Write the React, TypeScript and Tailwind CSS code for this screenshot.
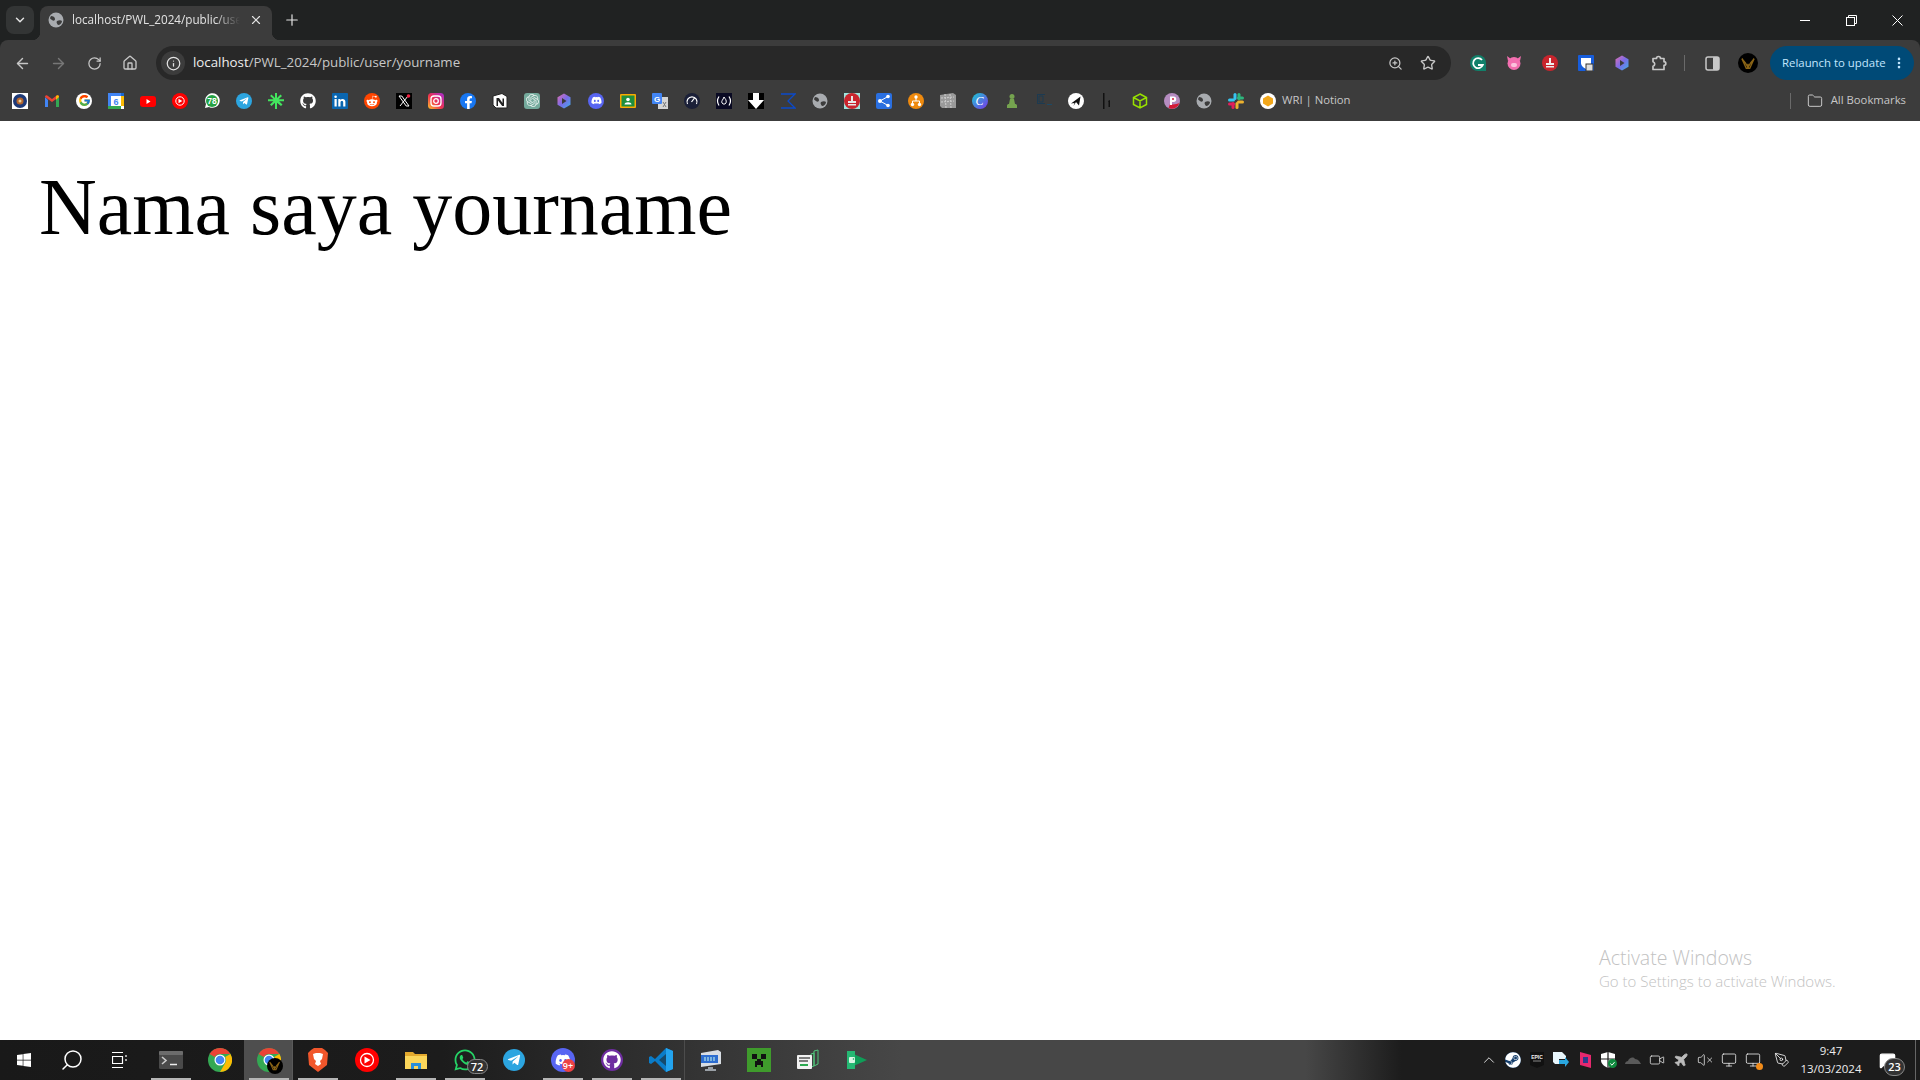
import React from "react";
import { ArrowLeft, ArrowRight, RotateCw, Info, ChevronDown, Plus, X, ZoomIn, Star, Folder, ChevronUp, Search, MoreVertical, Home, VolumeX, Plane, Video, Monitor, PenTool, MessageSquare } from "lucide-react";
import { FaGithub, FaTelegramPlane, FaDiscord, FaWhatsapp, FaRedditAlien, FaFacebookF, FaWindows, FaSteam } from "react-icons/fa";
import { FcGoogle } from "react-icons/fc";
import { SiOpenai } from "react-icons/si";

const ui = { fontFamily: '"Open Sans", "Noto Sans", sans-serif' };

const S = ({ children }: { children: React.ReactNode }) => (
  <svg width="16" height="16" viewBox="0 0 16 16">{children}</svg>
);

const GlobeGrey = () => (
  <S>
    <circle cx="8" cy="8" r="7.500" fill="#a8abaf" />
    <path d="M3 4c2 0 4 1 4 3S5 9 4 8 2 7 2 6zM9 9c2-1 4-1 5 0 0 2-2 4-4 4-1-1-2-3-1-4z" fill="#3c3c3c" />
  </S>
);

const bookmarks: React.ReactNode[] = [
  <S><rect width="16" height="16" fill="#fff" /><circle cx="8" cy="8" r="7" fill="#1e3a78" /><circle cx="8" cy="8" r="3.500" fill="#b5652c" /><circle cx="8" cy="8" r="1.500" fill="#e5d3a0" /></S>,
  <S><path d="M1 4v10h3V7z" fill="#4285f4" /><path d="M12 14h3V4l-3 3z" fill="#34a853" /><path d="M1 4c0-2 2-2 3-1l4 3 4-3c1-1 3-1 3 1l-7 5z" fill="#ea4335" /><path d="M12 3c1-1 3-1 3 1l-3 3z" fill="#fbbc04" /></S>,
  <span className="w-4 h-4 rounded-full bg-white flex items-center justify-center"><FcGoogle size={13} /></span>,
  <S><rect width="16" height="16" fill="#fff" /><rect width="16" height="3" fill="#4285f4" /><rect width="3" height="16" fill="#4285f4" /><rect x="13" width="3" height="13" fill="#fbbc04" /><rect y="13" width="13" height="3" fill="#34a853" /><rect x="13" width="3" height="3" fill="#1967d2" /><text x="8" y="11.500" fontSize="9" fontWeight="700" textAnchor="middle" fill="#4285f4" fontFamily="Liberation Sans">6</text></S>,
  <S><rect y="3" width="16" height="11" rx="3" fill="#f00" /><path d="M6.500 6v5l4-2.500z" fill="#fff" /></S>,
  <S><circle cx="8" cy="8" r="8" fill="#f00" /><circle cx="8" cy="8" r="4.200" fill="none" stroke="#fff" /><path d="M6.500 5.800v4.400L10.300 8z" fill="#fff" /></S>,
  <S><path d="M1 15l1-4A7.300 7.300 0 1 1 5 14z" fill="#fff" /><circle cx="8" cy="8" r="6" fill="#25a244" /><text x="8" y="11" fontSize="8.500" fontWeight="700" textAnchor="middle" fill="#fff" fontFamily="Liberation Sans">78</text></S>,
  <span className="w-4 h-4 rounded-full bg-[#2ca5e0] flex items-center justify-center text-white"><FaTelegramPlane size={10} /></span>,
  <S><path d="M7 0h2v5l3.500-3.500 1.500 1.500-3.400 3.200H16v2h-4.900l3.400 3.200-1.500 1.500L9 9.700V16H7V9.700l-3.500 3.200L2 11.400l3.400-3.200H0v-2h5.600L2.100 3l1.400-1.500L7 5z" fill="#43e55e" /></S>,
  <span className="text-white"><FaGithub size={16} /></span>,
  <S><rect width="16" height="16" rx="1" fill="#0a66b0" /><rect x="2.500" y="6" width="2.200" height="7.500" fill="#fff" /><circle cx="3.600" cy="3.800" r="1.300" fill="#fff" /><path d="M6.300 6h2.100v1c1-1.600 5-1.800 5 1.800v4.700h-2.200V9.500c0-2-2.700-1.800-2.700 0v4H6.300z" fill="#fff" /></S>,
  <span className="w-4 h-4 rounded-full bg-[#ff4500] flex items-center justify-center text-white"><FaRedditAlien size={12} /></span>,
  <S><rect width="16" height="16" fill="#000" /><path d="M3 3h2.800L13 13h-2.800zM12 3l-8 10" fill="none" stroke="#fff" strokeWidth="1" /><circle cx="12.500" cy="3" r="1.800" fill="#f02040" /></S>,
  <S><defs><linearGradient id="ig" x1="0" y1="1" x2="1" y2="0"><stop offset="0" stopColor="#fdc32c" /><stop offset=".45" stopColor="#f0324e" /><stop offset="1" stopColor="#a32bd3" /></linearGradient></defs><rect width="16" height="16" rx="3.500" fill="url(#ig)" /><rect x="3" y="3" width="10" height="10" rx="3" fill="none" stroke="#fff" strokeWidth="1.300" /><circle cx="8" cy="8" r="2.300" fill="none" stroke="#fff" strokeWidth="1.300" /></S>,
  <span className="w-4 h-4 rounded-full bg-[#1877f2] flex items-end justify-center text-white"><FaFacebookF size={13} /></span>,
  <S><path d="M1 3l9-2.500 5 3V15H4l-3-3z" fill="#fff" stroke="#222" strokeWidth="1" /><path d="M4.500 5h2.500l3.500 5V5.500h1.500V13h-1.800L6 7.500V13H4.500z" fill="#222" /></S>,
  <span className="w-4 h-4 rounded-[3px] bg-[#74aa9c] flex items-center justify-center text-white/80"><SiOpenai size={13} /></span>,
  <S><defs><linearGradient id="cp" x1="0" y1="0" x2="1" y2="1"><stop offset="0" stopColor="#e06fb0" /><stop offset=".5" stopColor="#7a6be8" /><stop offset="1" stopColor="#3fb0e8" /></linearGradient></defs><path d="M8 0.500l6.500 3.700v7.600L8 15.500l-6.500-3.700V4.200z" fill="url(#cp)" /><path d="M6 5l4.500 3L6 11z" fill="#3c3c3c" /></S>,
  <span className="w-4 h-4 rounded-full bg-[#5865f2] flex items-center justify-center text-white"><FaDiscord size={11} /></span>,
  <S><rect y="1" width="16" height="14" rx="1" fill="#f9ab00" /><rect x="1.500" y="2.500" width="13" height="11" fill="#1e8e3e" /><circle cx="8" cy="6.500" r="1.800" fill="#fff" /><path d="M4.500 11.500c0-3 7-3 7 0z" fill="#fff" /></S>,
  <S><rect x="6" y="4" width="10" height="12" fill="#d4d4d4" /><path d="M11 9l3 5M14 9l-3 5" stroke="#777" fill="none" /><rect width="10" height="11" rx="1" fill="#4285f4" /><text x="5" y="8.500" fontSize="8" fontWeight="700" textAnchor="middle" fill="#fff" fontFamily="Liberation Sans">G</text></S>,
  <S><circle cx="8" cy="8" r="8" fill="#1b2038" /><path d="M3.500 11a5 5 0 1 1 9 0" fill="none" stroke="#fff" strokeWidth="1.200" /><path d="M7.500 9l3-4" stroke="#fff" strokeWidth="1.200" /></S>,
  <S><rect width="16" height="16" fill="#0a0a23" /><path d="M3 3.500c-2 3-2 6 0 9M13 3.500c2 3 2 6 0 9" fill="none" stroke="#fff" strokeWidth="1.200" /><path d="M8 4c1 2 3 3 2 6-1 1.500-3 1.500-4 0-1-2 1-3 2-6z" fill="none" stroke="#fff" strokeWidth="1" /></S>,
  <S><rect width="16" height="16" fill="#000" /><path d="M5 0h6v7h5l-8 9-8-9h5z" fill="#fff" /></S>,
  <S><path d="M1 1h14L8 8l7 7H1" fill="none" stroke="#0b49c9" strokeWidth="1.300" /></S>,
  <GlobeGrey />,
  <S><rect width="16" height="16" fill="#9fe5dd" /><circle cx="8" cy="8" r="8" fill="#c9252d" /><path d="M7 3h2v5h3v2H4V8h3zM4 11h8v1.500H4z" fill="#e8e8e8" /></S>,
  <S><rect width="16" height="16" rx="2" fill="#2a6fe0" /><circle cx="4" cy="8" r="2" fill="#fff" /><circle cx="12" cy="3.500" r="1.800" fill="#fff" /><circle cx="12" cy="12.500" r="1.800" fill="#fff" /><path d="M4 8l8-4.500M4 8l8 4.500" stroke="#fff" /></S>,
  <S><circle cx="8" cy="8" r="8" fill="#ef8a0e" /><path d="M8 3v5M4.500 11.500V8h7v3.500" fill="none" stroke="#fff" strokeWidth="1" /><circle cx="8" cy="4" r="1.700" fill="#fff" /><circle cx="4.500" cy="11.500" r="1.700" fill="#fff" /><circle cx="11.500" cy="11.500" r="1.700" fill="#fff" /></S>,
  <S><path d="M0 2l13-2 3 2v13H2l-2-2z" fill="#9a9a9a" /><path d="M1 5l13-1M1 9l13-1M5 1l1 14M10 1l1 14" stroke="#c8c8c8" strokeWidth="1.200" strokeDasharray="2 1" /></S>,
  <S><defs><linearGradient id="cv" x1="0" y1="0" x2="1" y2="1"><stop offset="0" stopColor="#19cbd3" /><stop offset="1" stopColor="#7b33e8" /></linearGradient></defs><circle cx="8" cy="8" r="8" fill="url(#cv)" /><text x="7.500" y="12" fontSize="12" fontStyle="italic" textAnchor="middle" fill="#fff" fontFamily="Liberation Serif">C</text></S>,
  <S><circle cx="8" cy="3.500" r="2.500" fill="#75a34f" /><path d="M6 6h4l1 5H5zM3 12.500c0-1 1-1.500 2-1.500h6c1 0 2 .500 2 1.500V15H3z" fill="#75a34f" /></S>,
  <S><path d="M1 1h8v1H2v8h7v1H1z" fill="#1d3a50" /><path d="M3 3h4v6H3z" fill="none" stroke="#1d3a50" /><rect x="11" y="11" width="5" height="1" fill="#1d4a66" /></S>,
  <S><circle cx="8" cy="8" r="8" fill="#fff" /><path d="M12.500 3.500L3 10.500l3.500-.5-1 3 2.500-4 3 3.500z" fill="#111" /></S>,
  <S><path d="M3 0h1.500v16H3z" fill="#111" /><path d="M8 8l2-1v7H8.500V9z" fill="#111" /></S>,
  <S><path d="M8 1l6.500 3.500v7L8 15l-6.500-3.500v-7zM1.500 4.500L8 8l6.500-3.500M8 8v7" fill="none" stroke="#97e000" strokeWidth="1.500" /></S>,
  <S><circle cx="8" cy="8" r="8" fill="#b58cc0" /><path d="M15.500 10a8 8 0 0 1-11 5L6 11c3 1 7 0 9.500-1z" fill="#d31b37" /><path d="M6 3.500h3.500a2.500 2.500 0 0 1 0 5.500H8v3H6z" fill="#fff" /><circle cx="9" cy="6" r="1" fill="#d31b37" /></S>,
  <GlobeGrey />,
  <S><rect x="5.500" y="0" width="3" height="7" rx="1.500" fill="#36c5f0" /><rect x="0" y="5.500" width="7" height="3" rx="1.500" fill="#36c5f0" /><rect x="9" y="7.500" width="7" height="3" rx="1.500" fill="#ecb22e" /><rect x="7.500" y="9" width="3" height="7" rx="1.500" fill="#ecb22e" /><rect x="9.500" y="0" width="3" height="7" rx="1.500" fill="#2eb67d" /><rect x="9" y="3.500" width="7" height="3" rx="1.500" fill="#2eb67d" /><rect x="3.500" y="9" width="3" height="7" rx="1.500" fill="#e01e5a" /><rect x="0" y="9.500" width="7" height="3" rx="1.500" fill="#e01e5a" /></S>,
];

const ChromeLogo = ({ size = 24 }: { size?: number }) => (
  <svg width={size} height={size} viewBox="0 0 24 24">
    <circle cx="12" cy="12" r="12" fill="#34a853" />
    <path d="M12 0a12 12 0 0 1 10.400 6H12a6 6 0 0 0-5.200 3L1.600 6A12 12 0 0 1 12 0z" fill="#ea4335" />
    <path d="M22.400 6A12 12 0 0 1 12 24l5.200-9a6 6 0 0 0 0-6z" fill="#fbbc04" />
    <circle cx="12" cy="12" r="5.500" fill="#fff" />
    <circle cx="12" cy="12" r="4.300" fill="#4285f4" />
  </svg>
);

const VIcon = ({ size = 16 }: { size?: number }) => (
  <span className="rounded-full bg-black flex items-center justify-center" style={{ width: size, height: size }}>
    <svg width={size * 0.7} height={size * 0.7} viewBox="0 0 16 16"><path d="M1 3l5 11h1.500L8 9l.5 5H10l5-11-4 5-3 5-3-5z" fill="none" stroke="#8a6416" strokeWidth="1.500" /></svg>
  </span>
);

const apps: { node: React.ReactNode; under?: boolean; active?: boolean; stack?: boolean }[] = [
  { node: <svg width="24" height="18" viewBox="0 0 24 18"><rect width="24" height="18" rx="1.500" fill="#4a4a4a" /><rect width="24" height="4" rx="1" fill="#6c6c6c" /><path d="M3 6l4 3.500L3 13" stroke="#ccc" strokeWidth="1.600" fill="none" /><path d="M11 13.500h7" stroke="#eee" strokeWidth="1.500" /></svg>, under: true },
  { node: <ChromeLogo /> },
  { node: <span className="relative block w-6 h-6"><ChromeLogo /><span className="absolute left-[10px] top-[10px]"><VIcon size={16} /></span></span>, under: true, active: true, stack: true },
  { node: <svg width="20" height="24" viewBox="0 0 20 24"><path d="M3 2l3-2h8l3 2 3 3-1 12-9 7-9-7L0 5z" fill="#f1562b" /><path d="M5 6l3-1h4l3 1-1 5-2 2 1 3-3 2-3-2 1-3-2-2z" fill="#fff" /></svg>, under: true },
  { node: <svg width="24" height="24" viewBox="0 0 24 24"><circle cx="12" cy="12" r="12" fill="#f00" /><circle cx="12" cy="12" r="6.500" fill="none" stroke="#fff" strokeWidth="1.300" /><path d="M9.500 8.500v7l6-3.500z" fill="#fff" /></svg> },
  { node: <svg width="22" height="18" viewBox="0 0 22 18"><path d="M0 1h8l2 2h12v15H0z" fill="#e3a92e" /><rect y="5" width="22" height="13" fill="#fbd65a" /><path d="M6 12h10v6h-3v-3H9v3H6z" fill="#2a8fd8" /></svg>, under: true },
  { node: <span className="relative block w-6 h-6 text-[#25d366]"><FaWhatsapp size={24} /><span className="absolute left-[14px] top-[11px] w-[21px] h-[15px] rounded-full border border-[#888] bg-[#333] text-white text-[11px] leading-[13px] font-semibold text-center">72</span></span>, under: true },
  { node: <span className="w-[22px] h-[22px] rounded-full bg-[#2ca5e0] flex items-center justify-center text-white"><FaTelegramPlane size={14} /></span> },
  { node: <span className="relative block w-6 h-6"><span className="w-6 h-6 rounded-full bg-[#5865f2] flex items-center justify-center text-white"><FaDiscord size={16} /></span><span className="absolute left-[11px] top-[11px] w-[13px] h-[13px] rounded-full bg-[#ed4245] text-white text-[9px] leading-[13px] font-semibold text-center">9+</span></span>, under: true },
  { node: <span className="w-[22px] h-[22px] rounded-full bg-[#6e2da0] flex items-center justify-center text-white"><FaGithub size={18} /></span>, under: true },
  { node: <svg width="24" height="24" viewBox="0 0 24 24"><path d="M17 0l7 3v18l-7 3L6 13l-4 3-2-1V9l2-1 4 3z" fill="#0a7cc9" /><path d="M17 6v12l-7-6z" fill="#1f1f1f" opacity=".55" /><path d="M17 0l7 3v18l-7 3z" fill="#23a3ee" /></svg>, under: true, stack: true },
  { node: <svg width="24" height="24" viewBox="0 0 24 24"><path d="M3 5l17-3 3 2v12L3 19z" fill="#d8dde3" /><rect x="3" y="7" width="17" height="8" fill="#2d6dd0" /><path d="M6 10h11M6 12h11" stroke="#cfe" strokeDasharray="2 1" /><path d="M10 19h5v2h3v2H7v-2h3z" fill="#9aa0a6" /></svg> },
  { node: <svg width="24" height="24" viewBox="0 0 24 24"><rect width="24" height="24" fill="#3f9b2c" /><rect x="5" y="6" width="5" height="5" fill="#111" /><rect x="14" y="6" width="5" height="5" fill="#111" /><path d="M10 11h4v2h2v6h-2v-2h-4v2H8v-6h2z" fill="#111" /></svg> },
  { node: <svg width="24" height="24" viewBox="0 0 24 24"><path d="M18 3l4-1v14l-4 2zM15 6l3-1v13l-3 1z" fill="none" stroke="#4fc77b" strokeWidth="1" /><rect x="1" y="7" width="15" height="14" rx="1" fill="#f2f2f2" /><path d="M3 10h11M3 13h9" stroke="#555" strokeWidth="1.500" /><path d="M4 17h8" stroke="#2aa84f" strokeWidth="2" /></svg> },
  { node: <svg width="20" height="20" viewBox="0 0 20 20"><path d="M0 1l20 9-20 9z" fill="#0f9d58" /><path d="M0 1h8v18H0z" fill="#25b873" /><rect x="2" y="7" width="6" height="6" rx="1" fill="#d8f5e4" /><circle cx="6.500" cy="9" r=".800" fill="#0f9d58" /></svg> },
];

const tray: React.ReactNode[] = [
  <ChevronUp size={18} strokeWidth={1.300} className="text-[#ddd]" />,
  <span className="w-4 h-4 rounded-full bg-[#17406e] flex items-center justify-center text-white"><FaSteam size={16} /></span>,
  <svg width="14" height="16" viewBox="0 0 14 16"><path d="M0 0h14v13l-7 3-7-3z" fill="#111" /><text x="7" y="6.500" fontSize="5" fontWeight="700" textAnchor="middle" fill="#eee" fontFamily="Liberation Sans">EPIC</text><path d="M3 9h8" stroke="#888" /></svg>,
  <svg width="16" height="16" viewBox="0 0 16 16"><path d="M0 0h9l4 4v3H6v5H2L0 10z" fill="#e8f5fb" /><path d="M6 8h6V5l4 5-4 5v-3H6z" fill="#2aa7e0" /></svg>,
  <svg width="11" height="16" viewBox="0 0 11 16"><path d="M0 0l11 3v13L0 13z" fill="#e6286e" /><rect x="3" y="5" width="5" height="6" fill="#2b3a8c" /></svg>,
  <svg width="16" height="16" viewBox="0 0 16 16"><path d="M7 0l7 2v6c0 4-3 6-7 8-4-2-7-4-7-8V2z" fill="#fff" /><path d="M7 0v16M0 7h14" stroke="#1c1c1c" strokeWidth="1.200" /><circle cx="11.500" cy="11.500" r="4.500" fill="#108a3f" /><path d="M9.300 11.500l1.700 1.700 2.500-3" fill="none" stroke="#fff" /></svg>,
  <svg width="16" height="8" viewBox="0 0 16 8"><path d="M0 8c0-2 2-3 3-3 1-3 5-5 7-2 3 0 5 3 6 5z" fill="#5a5a5a" /></svg>,
  <Video size={16} strokeWidth={1.200} className="text-[#e5e5e5]" />,
  <Plane size={16} strokeWidth={1.200} fill="#bbb" className="text-[#bbb]" />,
  <VolumeX size={16} strokeWidth={1.200} className="text-[#e5e5e5]" />,
  <Monitor size={16} strokeWidth={1.200} className="text-[#f0f0f0]" />,
  <span className="relative block w-4 h-4"><Monitor size={16} strokeWidth={1.200} className="text-[#f0f0f0]" /><span className="absolute -right-[2px] -bottom-[2px] w-[7px] h-[7px] rounded-full bg-[#f28c1a]" /></span>,
];

const IconBtn = ({ children, x }: { children: React.ReactNode; x: string }) => (
  <span className={`${x} h-6 flex items-center justify-center text-[#c7c7c7]`}>{children}</span>
);

export default function App() {
  return (
    <div className="w-[1920px] h-[1080px] flex flex-col overflow-hidden bg-white" style={ui}>
      <div className="shrink-0 bg-[#202222]">
        {/* Tab strip */}
        <div className="h-10 flex items-end pl-[6px] text-[#e3e3e3]">
          <div className="w-7 h-7 mb-[6px] rounded-lg bg-[#333535] flex items-center justify-center">
            <ChevronDown size={14} strokeWidth={2.500} />
          </div>
          <div className="ml-[6px] w-[232px] h-[34px] rounded-t-lg bg-[#3c3c3c] flex items-center pl-2 pr-[9px] pb-[6px] relative">
            <span className="absolute -left-2 bottom-0 w-2 h-2 bg-[radial-gradient(circle_at_0_0,transparent_8px,#3c3c3c_8.500px)]" />
            <span className="absolute -right-2 bottom-0 w-2 h-2 bg-[radial-gradient(circle_at_100%_0,transparent_8px,#3c3c3c_8.500px)]" />
            <GlobeGrey />
            <span className="ml-2 w-[168px] overflow-hidden whitespace-nowrap text-[11.700px] mask-r-from-85% mask-r-to-100%">localhost/PWL_2024/public/user/yourname</span>
            <X size={14} strokeWidth={2} className="ml-auto" />
          </div>
          <Plus size={18} strokeWidth={1.600} className="ml-[11px] mb-[11px]" />
          <div className="ml-auto flex items-center h-10 text-white">
            <span className="w-[46px] flex justify-center"><span className="block w-[10px] h-[1px] bg-white" /></span>
            <span className="w-[46px] flex justify-center">
              <svg width="11" height="11" viewBox="0 0 11 11" fill="none" stroke="#fff"><rect x=".500" y="2.500" width="8" height="8" /><path d="M2.500 2.500v-2h8v8h-2" /></svg>
            </span>
            <span className="w-[46px] flex justify-center">
              <svg width="11" height="11" viewBox="0 0 11 11" stroke="#fff" strokeWidth="1"><path d="M.500 .500l10 10M10.500 .500l-10 10" /></svg>
            </span>
          </div>
        </div>

        {/* Toolbar */}
        <div className="h-10 bg-[#3c3c3c] rounded-t-lg flex items-center pt-[6px] pl-1 pr-[6px] text-[#c7c7c7]">
          <IconBtn x="w-9"><ArrowLeft size={17} strokeWidth={2} /></IconBtn>
          <IconBtn x="w-9"><ArrowRight size={17} strokeWidth={2} className="text-[#777]" /></IconBtn>
          <IconBtn x="w-9"><RotateCw size={15} strokeWidth={2} /></IconBtn>
          <IconBtn x="w-9"><Home size={16} strokeWidth={2} /></IconBtn>
          <div className="ml-2 w-[1295px] h-[34px] rounded-full bg-[#282828] flex items-center pl-[5px] pr-3">
            <span className="w-6 h-6 rounded-full bg-[#3c3c3c] flex items-center justify-center text-[#e3e3e3]"><Info size={15} /></span>
            <span className="ml-[8px] text-[13.300px] text-[#c7c7c7] whitespace-nowrap"><span className="text-[#eeeeee]">localhost</span>/PWL_2024/public/user/yourname</span>
            <ZoomIn size={15} className="ml-auto mr-[17px]" />
            <Star size={16} strokeWidth={2} className="mr-[3px]" />
          </div>
          <div className="flex items-center ml-auto h-[34px]">
            <span className="w-9 flex justify-center"><svg width="16" height="16" viewBox="0 0 16 16"><path d="M8 0a8 8 0 0 1 8 8v8H8A8 8 0 0 1 8 0z" fill="#11806a" /><path d="M12 5a5 5 0 1 0 .800 5H8" fill="none" stroke="#fff" strokeWidth="1.800" /></svg></span>
            <span className="w-9 flex justify-center"><svg width="16" height="14" viewBox="0 0 16 14"><circle cx="8" cy="7.500" r="6.500" fill="#f36fb0" /><path d="M1 0l4 3-3 2zM15 0l-4 3 3 2z" fill="#f36fb0" /><rect x="5" y="7" width="6" height="4" rx="2" fill="#fbc3dd" /></svg></span>
            <span className="w-9 flex justify-center"><svg width="16" height="16" viewBox="0 0 16 16"><circle cx="8" cy="8" r="8" fill="#c9252d" /><path d="M7 3h2v5h3v2H4V8h3zM4 11h8v1.500H4z" fill="#eee" /></svg></span>
            <span className="w-9 flex justify-center"><svg width="16" height="16" viewBox="0 0 16 16"><rect width="16" height="16" rx="1" fill="#175ddc" /><path d="M3 3h10v5c0 3-3 5-5 6-2-1-5-3-5-6z" fill="#fff" /><rect x="8" y="9" width="7" height="7" fill="#ddd" stroke="#333" /></svg></span>
            <span className="w-9 flex justify-center">{bookmarks[17]}</span>
            <span className="w-9 flex justify-center"><svg width="17" height="17" viewBox="0 0 17 17" fill="none" stroke="#c7c7c7" strokeWidth="1.700" strokeLinejoin="round"><path d="M3 3.500h3.500a2 2 0 0 1 4 0H14v3.200a1.800 1.800 0 0 1 0 3.600v4.200H3v-3.200a2.400 2.400 0 0 0 0-4.600z" /></svg></span>
            <span className="w-[1px] h-4 bg-[#6a6a6a] mx-[8px]" />
            <span className="w-9 flex justify-center ml-[1px]"><svg width="15" height="15" viewBox="0 0 15 15"><rect x="1" y="1" width="13" height="13" rx="2" fill="none" stroke="#c7c7c7" strokeWidth="1.500" /><rect x="8" y="1" width="6" height="13" rx="1" fill="#c7c7c7" /></svg></span>
            <span className="w-[36px] flex justify-center mr-[4px]"><VIcon size={20} /></span>
            <div className="w-[144px] h-[34px] rounded-full bg-[#004a77] flex items-center pl-[12px] text-[#c2e7ff] text-[11.400px] whitespace-nowrap">
              Relaunch to update
              <MoreVertical size={14} className="ml-auto mr-[8px]" strokeWidth={2.500} />
            </div>
          </div>
        </div>

        {/* Bookmarks */}
        <div className="h-[41px] bg-[#3c3c3c] flex items-center pl-3 pr-[14px]">
          {bookmarks.map((b, i) => (
            <span key={i} className="w-8 h-4 pr-4 flex items-center justify-start shrink-0">{b}</span>
          ))}
          <span className="flex items-center shrink-0">
            <svg width="16" height="16" viewBox="0 0 16 16"><circle cx="8" cy="8" r="8" fill="#fff" /><path d="M8 2.500l5 3v5l-5 3-5-3v-5z" fill="#f2a71b" /></svg>
            <span className="ml-[6px] text-[11.300px] text-[#c7c7c7] whitespace-nowrap">WRI | Notion</span>
          </span>
          <span className="ml-auto w-[1px] h-4 bg-[#6a6a6a]" />
          <Folder size={16} strokeWidth={1.500} className="ml-4 text-[#c7c7c7]" />
          <span className="ml-[8px] text-[11.300px] text-[#c7c7c7] whitespace-nowrap">All Bookmarks</span>
        </div>
      </div>

      {/* Page */}
      <main className="flex-1 relative bg-white pl-[39px] pt-[40px] min-h-0">
        <h1 className="text-[80px] font-normal text-black leading-[92px]" style={{ fontFamily: '"Liberation Serif", serif' }}>Nama saya yourname</h1>
        <div className="absolute left-[1599px] top-[824px] text-[#c2c2c2] whitespace-nowrap">
          <div className="text-[19.500px] leading-[26px] font-light">Activate Windows</div>
          <div className="text-[15px] leading-[20px] font-light">Go to Settings to activate Windows.</div>
        </div>
      </main>

      {/* Taskbar */}
      <footer className="h-10 shrink-0 flex items-center bg-[linear-gradient(90deg,#191919_0%,#1c1c1c_23%,#474747_47%,#474747_68%,#1c1c1c_73%,#1c1c1c_100%)] text-white">
        <span className="w-12 flex justify-center"><FaWindows size={16} /></span>
        <span className="w-12 flex justify-center"><Search size={24} strokeWidth={1.500} className="-scale-x-100" /></span>
        <span className="w-[50px] flex justify-center pr-[2px]">
          <svg width="16" height="16" viewBox="0 0 16 16" fill="none" stroke="#fff"><path d="M0 .500h11M0 15.500h11M.500 4.500h10v7H.500zM14 3v2M14 7v2" strokeWidth="1.200" /></svg>
        </span>
        {apps.map((a, i) => (
          <span key={i} className={`relative w-[49px] h-10 flex items-center justify-center ${a.active ? "bg-[#4e4e4e]" : ""}`}>
            {a.node}
            {a.under && <span className="absolute bottom-0 left-[5px] w-10 h-[2px] bg-[#b5b5b5]" />}
            {a.stack && <span className="absolute bottom-0 left-[45px] w-1 h-full border-r border-[#666] opacity-50" />}
          </span>
        ))}
        <div className="ml-auto flex items-center h-10">
          {tray.map((t, i) => (
            <span key={i} className="w-[24px] flex justify-center">{t}</span>
          ))}
          <span className="w-[34px] flex justify-center"><PenTool size={16} strokeWidth={1.200} /></span>
          <div className="w-[78px] -ml-[7px] text-center text-[11.500px] leading-[18px] text-[#eee] whitespace-nowrap">
            <div>9:47</div>
            <div>13/03/2024</div>
          </div>
          <span className="relative w-[50px] h-10 flex items-center justify-center pr-4">
            <MessageSquare size={17} fill="#fff" />
            <span className="absolute left-[14px] top-[18px] w-[21px] h-[18px] rounded-full border border-[#888] bg-[#333] text-white text-[11px] leading-[16px] font-semibold text-center">23</span>
            <span className="absolute right-[4px] top-0 w-[1px] h-10 bg-[#666]" />
          </span>
        </div>
      </footer>
    </div>
  );
}
